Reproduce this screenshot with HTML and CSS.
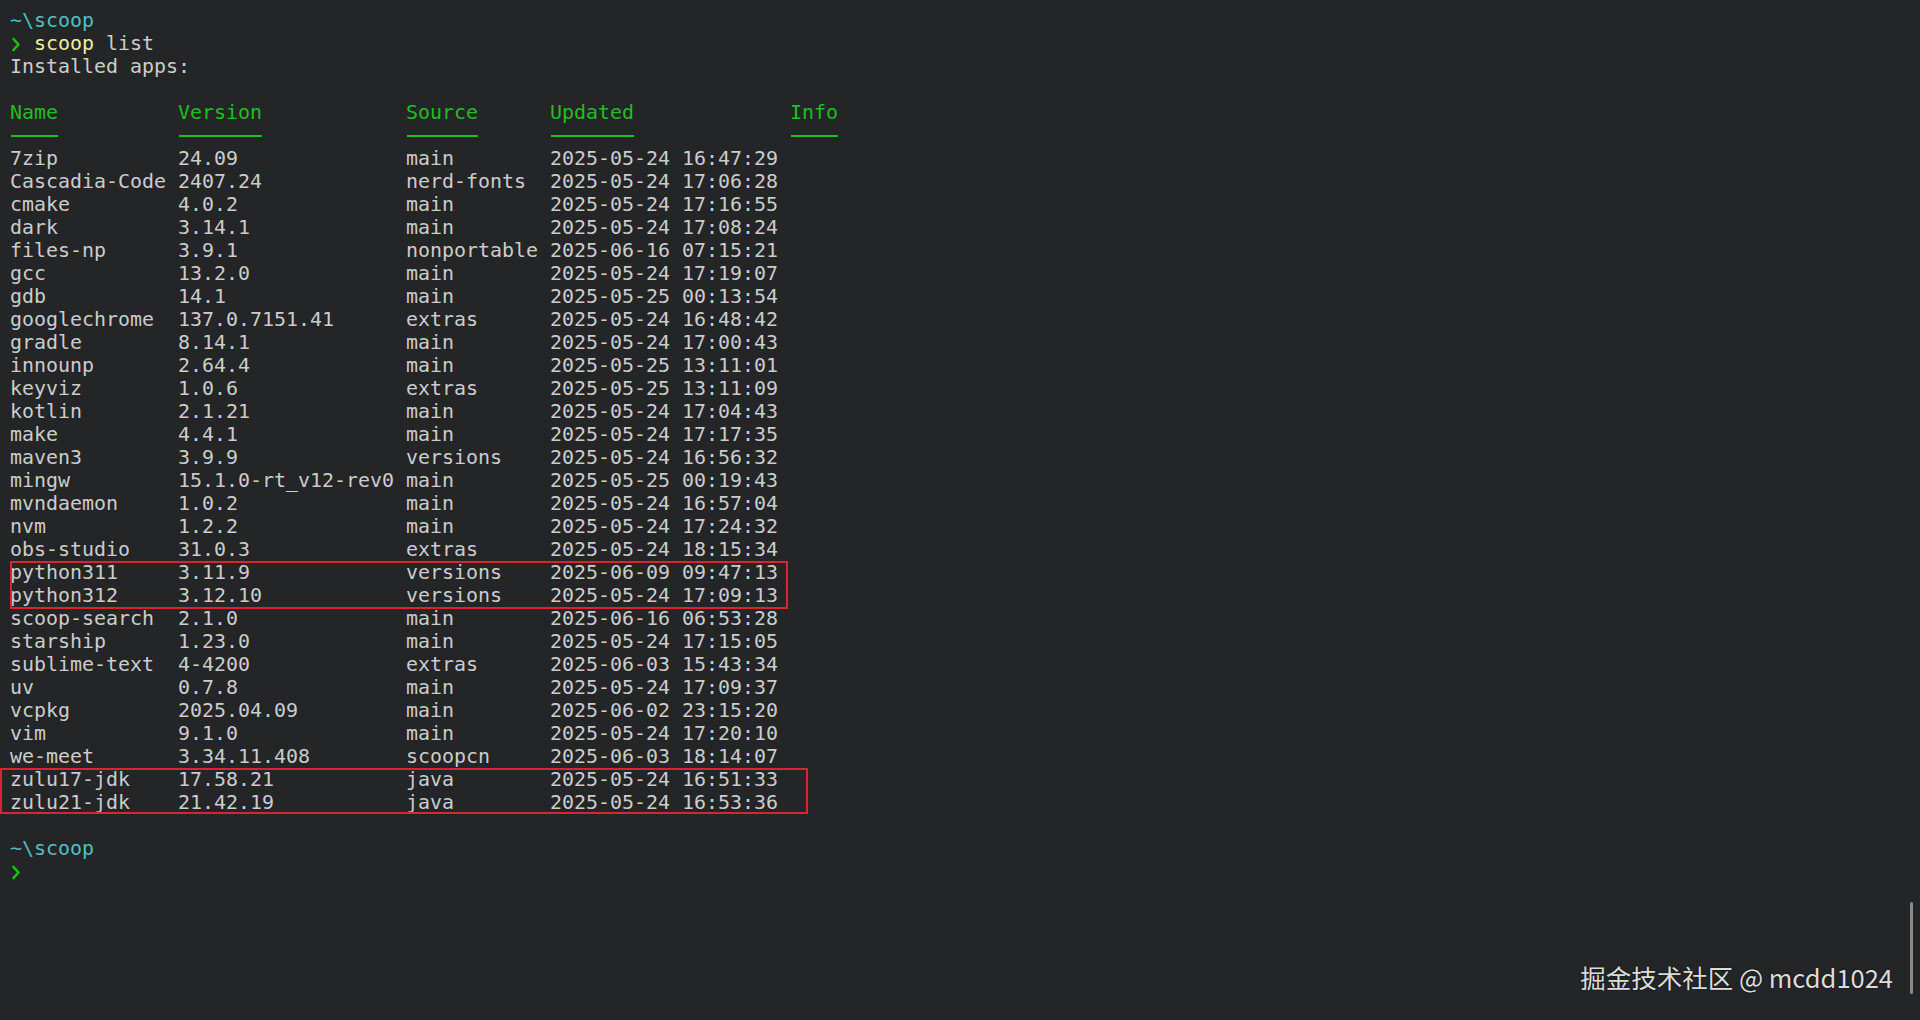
FILE: index.html
```html
<!DOCTYPE html>
<html lang="en">

<head>
   <meta charset="UTF-8">
   <meta name="viewport" content="width=device-width, initial-scale=1.0">
   <link rel="stylesheet" href="styles.css">
</head>

<body>
   <div class="term">
      <div class="line"><span class="path">~\scoop</span></div>
      <div class="line"><svg class="prompt" viewBox="0 0 12 23"><path d="M3.5 7 L8.5 12.5 L3.5 18" /></svg> <span class="cmd">scoop</span> list</div>
      <div class="line">Installed apps:</div>
      <div class="line"></div>

      <div class="row head">
         <span>Name</span><span>Version</span><span>Source</span><span>Updated</span><span>Info</span>
      </div>
      <div class="row rule">
         <span><i class="dash w4"></i></span><span><i class="dash w7"></i></span><span><i class="dash w6"></i></span><span><i class="dash w7"></i></span><span><i class="dash w4"></i></span>
      </div>

      <div class="row"><span>7zip</span><span>24.09</span><span>main</span><span>2025-05-24 16:47:29</span></div>
      <div class="row"><span>Cascadia-Code</span><span>2407.24</span><span>nerd-fonts</span><span>2025-05-24 17:06:28</span></div>
      <div class="row"><span>cmake</span><span>4.0.2</span><span>main</span><span>2025-05-24 17:16:55</span></div>
      <div class="row"><span>dark</span><span>3.14.1</span><span>main</span><span>2025-05-24 17:08:24</span></div>
      <div class="row"><span>files-np</span><span>3.9.1</span><span>nonportable</span><span>2025-06-16 07:15:21</span></div>
      <div class="row"><span>gcc</span><span>13.2.0</span><span>main</span><span>2025-05-24 17:19:07</span></div>
      <div class="row"><span>gdb</span><span>14.1</span><span>main</span><span>2025-05-25 00:13:54</span></div>
      <div class="row"><span>googlechrome</span><span>137.0.7151.41</span><span>extras</span><span>2025-05-24 16:48:42</span></div>
      <div class="row"><span>gradle</span><span>8.14.1</span><span>main</span><span>2025-05-24 17:00:43</span></div>
      <div class="row"><span>innounp</span><span>2.64.4</span><span>main</span><span>2025-05-25 13:11:01</span></div>
      <div class="row"><span>keyviz</span><span>1.0.6</span><span>extras</span><span>2025-05-25 13:11:09</span></div>
      <div class="row"><span>kotlin</span><span>2.1.21</span><span>main</span><span>2025-05-24 17:04:43</span></div>
      <div class="row"><span>make</span><span>4.4.1</span><span>main</span><span>2025-05-24 17:17:35</span></div>
      <div class="row"><span>maven3</span><span>3.9.9</span><span>versions</span><span>2025-05-24 16:56:32</span></div>
      <div class="row"><span>mingw</span><span>15.1.0-rt_v12-rev0</span><span>main</span><span>2025-05-25 00:19:43</span></div>
      <div class="row"><span>mvndaemon</span><span>1.0.2</span><span>main</span><span>2025-05-24 16:57:04</span></div>
      <div class="row"><span>nvm</span><span>1.2.2</span><span>main</span><span>2025-05-24 17:24:32</span></div>
      <div class="row"><span>obs-studio</span><span>31.0.3</span><span>extras</span><span>2025-05-24 18:15:34</span></div>

      <div class="mark mark-python">
         <div class="row"><span>python311</span><span>3.11.9</span><span>versions</span><span>2025-06-09 09:47:13</span></div>
         <div class="row"><span>python312</span><span>3.12.10</span><span>versions</span><span>2025-05-24 17:09:13</span></div>
      </div>

      <div class="row"><span>scoop-search</span><span>2.1.0</span><span>main</span><span>2025-06-16 06:53:28</span></div>
      <div class="row"><span>starship</span><span>1.23.0</span><span>main</span><span>2025-05-24 17:15:05</span></div>
      <div class="row"><span>sublime-text</span><span>4-4200</span><span>extras</span><span>2025-06-03 15:43:34</span></div>
      <div class="row"><span>uv</span><span>0.7.8</span><span>main</span><span>2025-05-24 17:09:37</span></div>
      <div class="row"><span>vcpkg</span><span>2025.04.09</span><span>main</span><span>2025-06-02 23:15:20</span></div>
      <div class="row"><span>vim</span><span>9.1.0</span><span>main</span><span>2025-05-24 17:20:10</span></div>
      <div class="row"><span>we-meet</span><span>3.34.11.408</span><span>scoopcn</span><span>2025-06-03 18:14:07</span></div>

      <div class="mark mark-java">
         <div class="row"><span>zulu17-jdk</span><span>17.58.21</span><span>java</span><span>2025-05-24 16:51:33</span></div>
         <div class="row"><span>zulu21-jdk</span><span>21.42.19</span><span>java</span><span>2025-05-24 16:53:36</span></div>
      </div>

      <div class="line"></div>
      <div class="line"><span class="path">~\scoop</span></div>
      <div class="line"><svg class="prompt" viewBox="0 0 12 23"><path d="M3.5 7 L8.5 12.5 L3.5 18" /></svg></div>
   </div>

   <div class="scrollbar"></div>
   <div class="watermark">掘金技术社区 @ mcdd1024</div>
</body>

</html>
```

FILE: styles.css
```css
html,
body {
   margin: 0;
   height: 100%;
   background-color: #242526;
   overflow: hidden;
}

.term {
   padding: 9px 0 0 10px;
   font-family: "DejaVu Sans Mono", "Liberation Mono", monospace;
   font-size: 19.95px;
   line-height: 23px;
   color: #cccccc;
}

.line {
   height: 23px;
   white-space: pre;
}

.path {
   color: #4ec1c4;
}

.prompt {
   width: 12px;
   height: 23px;
   vertical-align: top;
}

.prompt path {
   fill: none;
   stroke: #16c60c;
   stroke-width: 2.6;
   stroke-linecap: round;
   stroke-linejoin: round;
}

.cmd {
   color: #f3eda0;
}

.row {
   display: grid;
   grid-template-columns: 168px 228px 144px 240px auto;
   height: 23px;
   white-space: pre;
}

.head {
   color: #1fbf1f;
}

.rule {
   align-items: center;
}

.dash {
   display: block;
   height: 2px;
   margin-left: 1px;
   background-color: #1fbf1f;
}

.w4 {
   width: 47px;
}

.w6 {
   width: 71px;
}

.w7 {
   width: 83px;
}

.mark {
   position: relative;
}

.mark::after {
   content: "";
   position: absolute;
   border: 2px solid #dc2330;
   pointer-events: none;
}

.mark-python::after {
   top: 0;
   bottom: -2px;
   left: 0;
   width: 774px;
}

.mark-java::after {
   top: 0;
   bottom: 0;
   left: -10px;
   width: 804px;
}

.scrollbar {
   position: absolute;
   left: 1910px;
   top: 902px;
   width: 3px;
   height: 92px;
   background-color: #8a8a8a;
   border-radius: 2px;
}

.watermark {
   position: absolute;
   right: 27px;
   top: 961px;
   font-family: "Noto Sans CJK SC", "Noto Sans", sans-serif;
   font-size: 25.5px;
   line-height: 32px;
   color: #dcdcdc;
   text-shadow: 0 0 2px rgba(0, 0, 0, 0.6);
}
```
